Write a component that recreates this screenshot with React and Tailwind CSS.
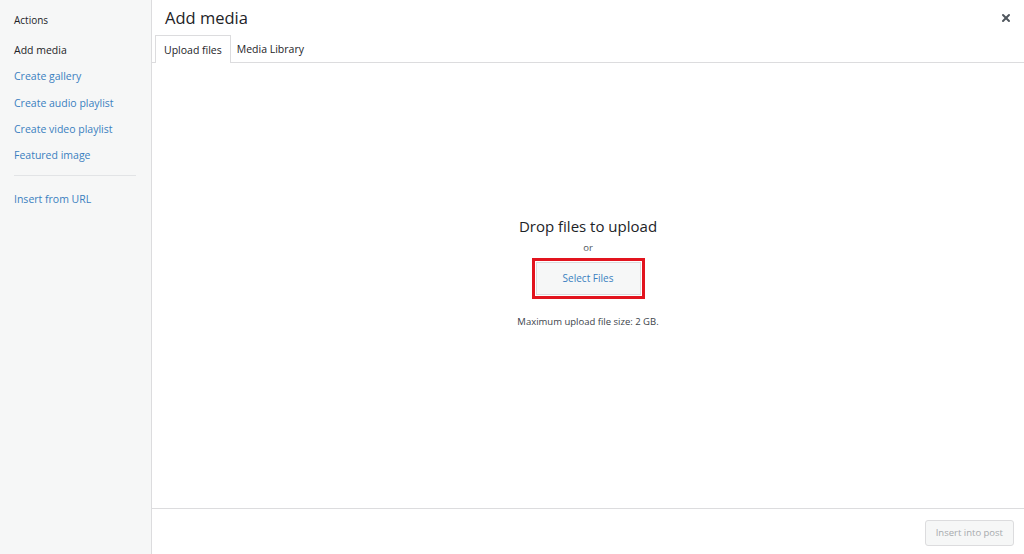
import { X } from "lucide-react";

const links = ["Create gallery", "Create audio playlist", "Create video playlist", "Featured image"];

const Sidebar = () => (
  <div className="w-[152px] shrink-0 bg-[#f6f7f7] border-r border-[#dcdcde] pt-[13px]">
    <h3 className="px-[14px] text-[10px] leading-[14px] text-[#1d2327]">Actions</h3>
    <ul className="mt-[16px]">
      <li className="px-[14px] h-[26.3px] text-[10.5px] leading-[14px] text-[#1d2327]">Add media</li>
      {links.map((label) => (
        <li key={label} className="px-[14px] h-[26.3px] text-[10.5px] leading-[14px] text-[#3a7fc0]">
          {label}
        </li>
      ))}
    </ul>
    <div className="mx-[14px] mr-[15px] mt-[1px] border-t border-[#e2e4e6]" />
    <div className="px-[14px] mt-[16px] text-[10.5px] leading-[14px] text-[#3a7fc0]">Insert from URL</div>
  </div>
);

const App = () => {
  return (
    <div
      className="flex h-[554px] w-[1024px] bg-white text-[#1d2327]"
      style={{ fontFamily: '"Open Sans", "Noto Sans", sans-serif' }}
    >
      <Sidebar />
      <div className="flex-1 flex flex-col">
        <div className="flex items-center justify-between h-[35px] pl-[13px] pr-[12px]">
          <h1 className="text-[16.5px] leading-[22px] text-[#1d2327]">Add media</h1>
          <X className="w-[12px] h-[12px] text-[#50575e]" strokeWidth={4} />
        </div>
        <div className="flex items-end h-[28px] border-b border-[#dcdcde] pl-[3px]">
          <div className="h-[28px] pt-[2px] px-[8px] flex items-center border border-b-0 border-[#dcdcde] bg-white mb-[-1px] text-[10.5px]">
            Upload files
          </div>
          <div className="h-[27px] pt-[2px] px-[6px] flex items-center text-[10.5px]">Media Library</div>
        </div>
        <div className="flex-1 flex flex-col items-center pt-[153px]">
          <div className="text-[15px] leading-[20px] text-[#1d2327]">Drop files to upload</div>
          <div className="mt-[5px] text-[9.5px] leading-[14px] text-[#50575e]">or</div>
          <div className="mt-[3px] border-[3px] border-[#e2141e] p-[1px]">
            <button className="w-[105px] h-[33px] bg-[#f6f7f7] border border-[#dcdcde] text-[10px] text-[#3a7fc0]">
              Select Files
            </button>
          </div>
          <div className="mt-[16px] text-[9.5px] leading-[14px] text-[#3c434a]">Maximum upload file size: 2 GB.</div>
        </div>
        <div className="h-[46px] border-t border-[#dcdcde] flex items-center justify-end pr-[10px] pt-[3px]">
          <button className="h-[26px] px-[10px] rounded-[3px] border border-[#dcdcde] bg-[#f6f7f7] text-[9.5px] text-[#a7aaad]">
            Insert into post
          </button>
        </div>
      </div>
    </div>
  );
};

export default App;
